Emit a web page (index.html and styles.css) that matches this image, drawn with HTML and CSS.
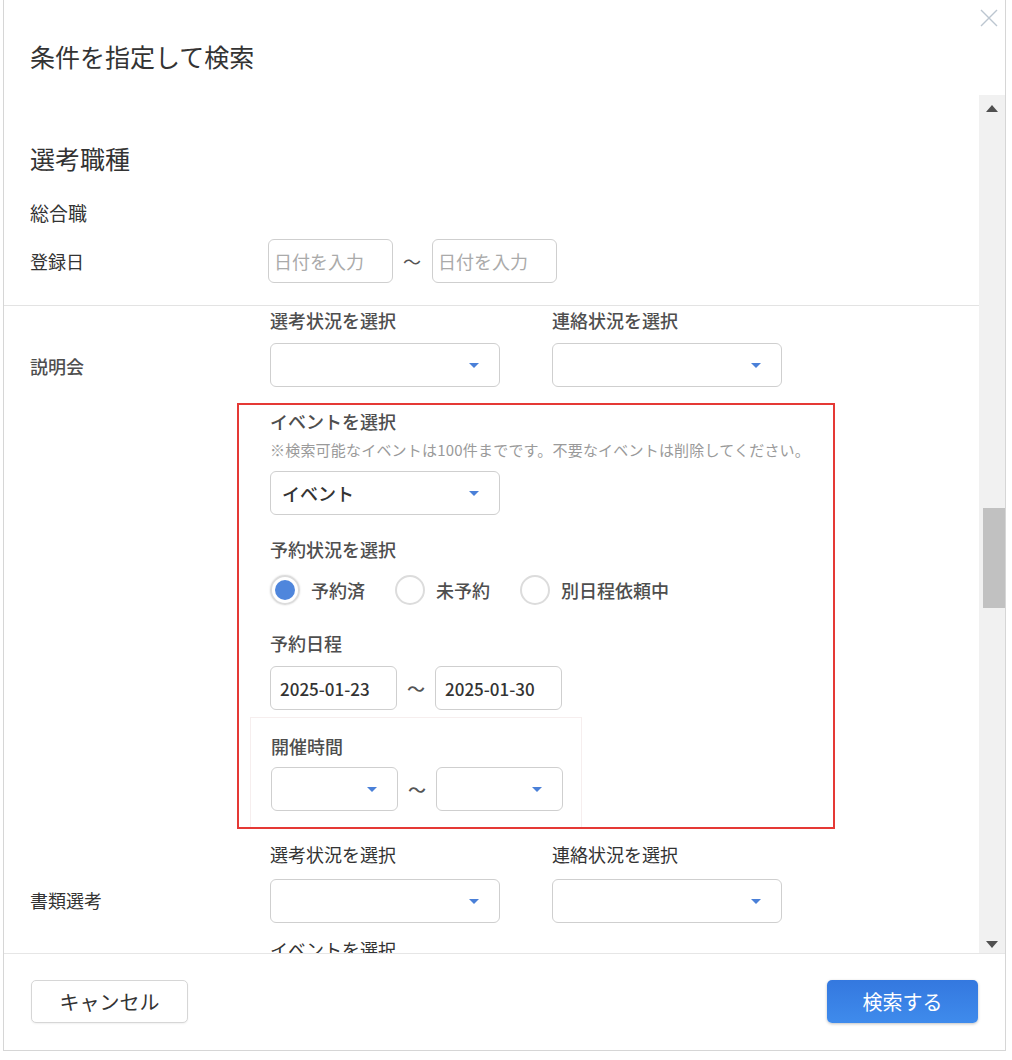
FILE: index.html
```html
<!DOCTYPE html>
<html lang="ja">
<head>
  <meta charset="UTF-8">
  <meta name="viewport" content="width=device-width, initial-scale=1.0">
  <title>条件を指定して検索</title>
  <link rel="stylesheet" href="styles.css">
</head>
<body>
  <div class="modal">
    <header class="modal-head">
      <h1 class="modal-title">条件を指定して検索</h1>
      <button class="close-btn" aria-label="閉じる">
        <svg width="18" height="18" viewBox="0 0 18 18"><path d="M1 1 L17 17 M17 1 L1 17" stroke="#bcc6d0" stroke-width="1.4" fill="none"/></svg>
      </button>
    </header>

    <div class="modal-body">
      <div class="scroll-area">
        <h2 class="group-title">選考職種</h2>
        <p class="job-name">総合職</p>

        <div class="row">
          <div class="row-label">登録日</div>
          <div class="range reg-range">
            <div class="field date-field placeholder">日付を入力</div>
            <span class="tilde">〜</span>
            <div class="field date-field placeholder">日付を入力</div>
          </div>
        </div>

        <hr class="divider">

        <!-- 説明会 -->
        <section class="stage stage-strong">
          <div class="stage-label">説明会</div>
          <div class="stage-fields">
            <div class="status-pair">
              <div class="status-col">
                <div class="field-label">選考状況を選択</div>
                <div class="field select"><span></span><i class="caret"></i></div>
              </div>
              <div class="status-col">
                <div class="field-label">連絡状況を選択</div>
                <div class="field select"><span></span><i class="caret"></i></div>
              </div>
            </div>

            <div class="event-box">
              <div class="field-label">イベントを選択</div>
              <p class="note">※検索可能なイベントは100件までです。不要なイベントは削除してください。</p>
              <div class="field select event-select"><span>イベント</span><i class="caret"></i></div>

              <div class="field-label gap-lg">予約状況を選択</div>
              <div class="radio-row">
                <label class="radio-opt"><span class="radio checked"></span>予約済</label>
                <label class="radio-opt"><span class="radio"></span>未予約</label>
                <label class="radio-opt"><span class="radio"></span>別日程依頼中</label>
              </div>

              <div class="field-label gap-xl">予約日程</div>
              <div class="range gap-sm">
                <div class="field date-field">2025-01-23</div>
                <span class="tilde">〜</span>
                <div class="field date-field">2025-01-30</div>
              </div>

              <div class="time-box">
                <div class="field-label">開催時間</div>
                <div class="range gap-sm">
                  <div class="field select time-select"><span></span><i class="caret"></i></div>
                  <span class="tilde">〜</span>
                  <div class="field select time-select"><span></span><i class="caret"></i></div>
                </div>
              </div>
            </div>
          </div>
        </section>

        <!-- 書類選考 -->
        <section class="stage stage-next">
          <div class="stage-label">書類選考</div>
          <div class="stage-fields">
            <div class="status-pair">
              <div class="status-col">
                <div class="field-label">選考状況を選択</div>
                <div class="field select"><span></span><i class="caret"></i></div>
              </div>
              <div class="status-col">
                <div class="field-label">連絡状況を選択</div>
                <div class="field select"><span></span><i class="caret"></i></div>
              </div>
            </div>
            <div class="field-label cut-label">イベントを選択</div>
          </div>
        </section>
      </div>

      <div class="scrollbar">
        <span class="sb-arrow sb-up"></span>
        <div class="sb-track"><div class="sb-thumb"></div></div>
        <span class="sb-arrow sb-down"></span>
      </div>
    </div>

    <footer class="modal-foot">
      <button class="btn btn-cancel">キャンセル</button>
      <button class="btn btn-search">検索する</button>
    </footer>
  </div>
</body>
</html>
```

FILE: styles.css
```css
* {
  box-sizing: border-box;
}
body {
  margin: 0;
  background: #fff;
  font-family: "Noto Sans CJK JP", "Noto Sans", sans-serif;
  color: #333;
}
.modal {
  position: relative;
  width: 1003px;
  height: 1051px;
  margin-left: 3px;
  border: 1px solid #d6d6d6;
  border-top: none;
  display: flex;
  flex-direction: column;
  background: #fff;
}
.modal-head {
  height: 95px;
  flex: none;
  padding: 39px 0 0 26px;
}
.modal-title {
  margin: 0;
  font-size: 25px;
  line-height: 34px;
  font-weight: 400;
  color: #333;
}
.close-btn {
  position: absolute;
  top: 9px;
  right: 7px;
  width: 18px;
  height: 18px;
  padding: 0;
  border: none;
  background: none;
  cursor: pointer;
}
.close-btn svg {
  display: block;
}

/* body + fake scrollbar */
.modal-body {
  height: 858px;
  flex: none;
  display: flex;
}
.scroll-area {
  flex: 1;
  overflow: hidden;
  padding-left: 26px;
}
.scrollbar {
  width: 26px;
  background: #f1f1f1;
  display: flex;
  flex-direction: column;
  align-items: center;
}
.sb-arrow {
  width: 0;
  height: 0;
  border-left: 6px solid transparent;
  border-right: 6px solid transparent;
}
.sb-up {
  margin-top: 10px;
  border-bottom: 7px solid #505050;
}
.sb-down {
  margin-bottom: 5px;
  border-top: 7px solid #505050;
}
.sb-track {
  flex: 1;
  width: 100%;
}
.sb-thumb {
  margin: 396px 0 0 4px;
  width: 22px;
  height: 100px;
  background: #c1c1c1;
}

/* top part */
.group-title {
  margin: 46px 0 0;
  font-size: 25px;
  line-height: 34px;
  font-weight: 400;
}
.job-name {
  margin: 25px 0 0;
  font-size: 19px;
  line-height: 26px;
}
.row {
  margin-top: 13px;
  display: flex;
  align-items: center;
}
.row-label {
  width: 240px;
  font-size: 18px;
  line-height: 26px;
}
.range {
  display: flex;
  align-items: center;
}
.reg-range {
  margin-left: -2px;
}
.reg-range .date-field {
  width: 125px;
  padding-left: 5px;
  font-size: 18px;
}
.reg-range .tilde {
  margin: 0 11px 0 10px;
}
.tilde {
  margin: 0 10px;
  font-size: 18px;
  width: 18px;
  color: #555;
}
.divider {
  margin: 22px 0 0 -26px;
  border: none;
  border-top: 1px solid #e3e3e3;
  height: 0;
}

/* fields */
.field {
  height: 44px;
  border: 1px solid #cfcfcf;
  border-radius: 6px;
  background: #fff;
  display: flex;
  align-items: center;
  font-size: 17px;
  color: #333;
}
.date-field {
  width: 127px;
  padding-left: 9px;
}
.placeholder {
  color: #aaa;
}
.select {
  width: 230px;
  justify-content: space-between;
  padding: 0 20px 0 11px;
}
.caret {
  width: 0;
  height: 0;
  border-left: 5px solid transparent;
  border-right: 5px solid transparent;
  border-top: 5px solid #4a80d8;
}
.time-select {
  width: 127px;
}
.event-select span {
  font-size: 18px;
  font-weight: 500;
  color: #333;
}

/* stages */
.stage {
  display: flex;
}
.stage-strong {
  margin-top: 1px;
  font-weight: 500;
  color: #4e4e4e;
}
.stage-next {
  margin-top: 12px;
}
.stage-label {
  width: 240px;
  flex: none;
  padding-top: 46px;
  font-size: 18px;
  line-height: 26px;
}
.stage-fields {
  flex: 1;
}
.status-pair {
  display: flex;
  gap: 52px;
}
.field-label {
  font-size: 18px;
  line-height: 26px;
}
.status-col .field {
  margin-top: 10px;
}
.stage-next .status-col .field {
  margin-top: 12px;
}
.cut-label {
  margin-top: 13px;
}

/* highlighted block */
.event-box {
  margin: 16px 0 0 -33px;
  width: 598px;
  padding: 3px 0 0 31px;
  border: 2px solid #e53935;
}
.note {
  margin: 6px 0 0;
  font-size: 15px;
  line-height: 20px;
  font-weight: 400;
  letter-spacing: 0.2px;
  color: #9a9a9a;
}
.event-select {
  margin-top: 11px;
}
.gap-lg {
  margin-top: 21px;
}
.gap-xl {
  margin-top: 25px;
}
.gap-sm {
  margin-top: 10px;
}
.radio-row {
  margin-top: 13px;
  display: flex;
}
.radio-opt {
  display: flex;
  align-items: center;
  margin-right: 30px;
  font-size: 18px;
  line-height: 30px;
}
.radio {
  width: 30px;
  height: 30px;
  margin-right: 11px;
  border: 2px solid #dcdcdc;
  border-radius: 50%;
  display: flex;
  align-items: center;
  justify-content: center;
}
.radio.checked {
  box-shadow: 0 0 2px rgba(0, 0, 0, 0.15);
}
.radio.checked::after {
  content: "";
  width: 20px;
  height: 20px;
  border-radius: 50%;
  background: #4f86dc;
}
.time-box {
  margin: 7px 0 0 -20px;
  width: 332px;
  padding: 15px 0 16px 20px;
  border: 1px solid #f6eeee;
  border-bottom: none;
}
.time-box .range {
  margin-top: 8px;
}

/* footer */
.modal-foot {
  flex: none;
  border-top: 1px solid #e6e6e6;
  padding: 26px 27px 0 27px;
  display: flex;
  justify-content: space-between;
}
.btn {
  height: 43px;
  border-radius: 5px;
  font-family: inherit;
  font-size: 20px;
  cursor: pointer;
}
.btn-cancel {
  width: 157px;
  background: #fff;
  color: #333;
  border: 1px solid #d6d6d6;
  box-shadow: 0 1px 2px rgba(0, 0, 0, 0.06);
}
.btn-search {
  width: 151px;
  border: none;
  color: #fff;
  background: linear-gradient(#3478df, #3f8bec);
  box-shadow: 0 1px 3px rgba(0, 0, 0, 0.25);
}
```
